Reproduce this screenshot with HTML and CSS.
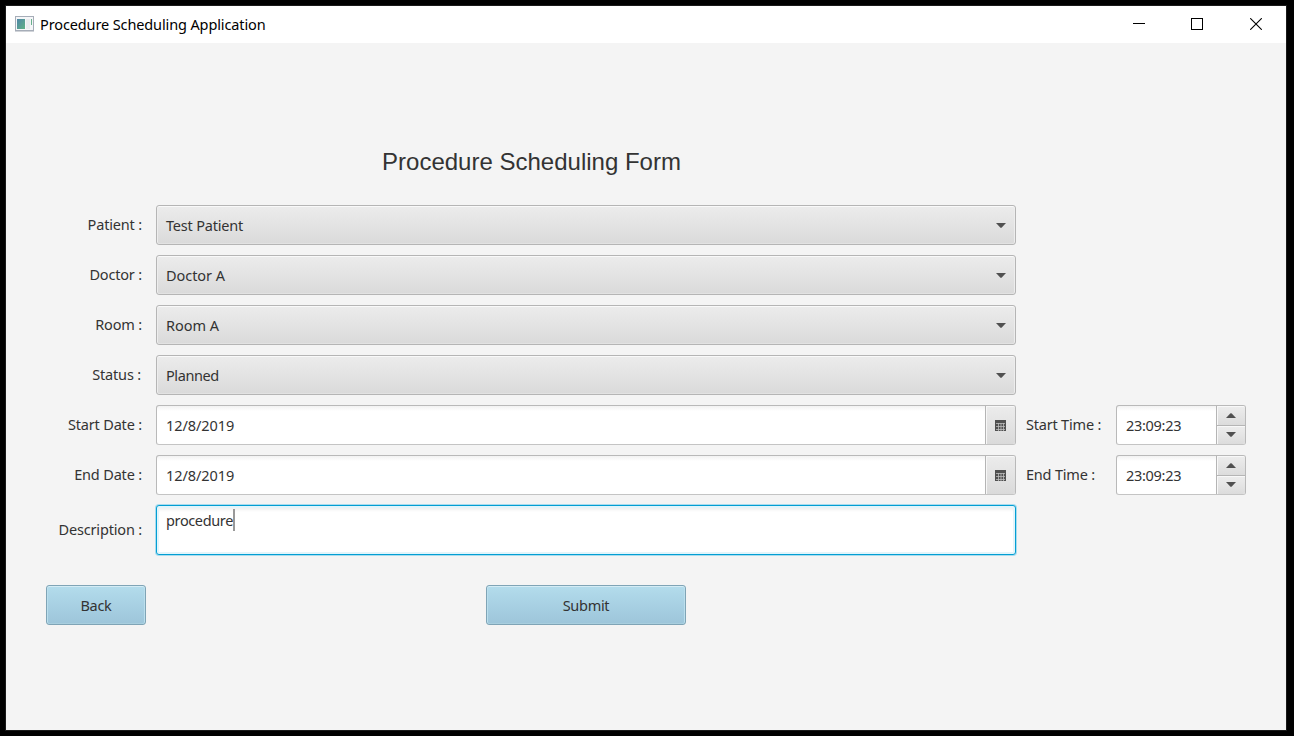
FILE: index.html
```html
<!DOCTYPE html>
<html lang="en">
<head>
<meta charset="utf-8">
<title>Procedure Scheduling Application</title>
<link rel="stylesheet" href="styles.css">
</head>
<body>
<div class="window">
  <header class="titlebar">
    <svg class="app-icon" width="19" height="16" viewBox="0 0 19 16"><defs><linearGradient id="g" x2="1" y2="1"><stop stop-color="#4f86a8"/><stop offset="1" stop-color="#5fb184"/></linearGradient></defs><rect x=".5" y=".5" width="18" height="14" fill="#f5f6f8" stroke="#a6adb8"/><path class="base" d="M0 15.5h19"/><rect x="2" y="3" width="8" height="10" fill="url(#g)"/><rect x="11" y="3" width="4" height="10" fill="#e9ebee"/><path class="mark" d="M16.5 3v6"/></svg>
    <span class="title">Procedure Scheduling Application</span>
    <div class="controls">
      <svg width="12" height="12" viewBox="0 0 12 12"><path d="M0 5.5h12"/></svg>
      <svg width="12" height="12" viewBox="0 0 12 12"><rect x=".5" y=".5" width="11" height="11"/></svg>
      <svg class="close" width="12" height="12" viewBox="0 0 12 12"><path d="M.2 .2l11.6 11.6M11.8 .2L.2 11.8"/></svg>
    </div>
  </header>
  <main class="content">
    <h1 class="heading">Procedure Scheduling Form</h1>
    <div class="form">
      <div class="label">Patient :</div>
      <div class="combo"><span>Test Patient</span><svg width="10" height="5" viewBox="0 0 10 5"><path d="M0 0h10L5.8 4.4q-.8.7-1.6 0z"/></svg></div>
      <div class="label">Doctor :</div>
      <div class="combo"><span class="loose">Doctor A</span><svg width="10" height="5" viewBox="0 0 10 5"><path d="M0 0h10L5.8 4.4q-.8.7-1.6 0z"/></svg></div>
      <div class="label">Room :</div>
      <div class="combo"><span class="loose">Room A</span><svg width="10" height="5" viewBox="0 0 10 5"><path d="M0 0h10L5.8 4.4q-.8.7-1.6 0z"/></svg></div>
      <div class="label status-label">Status :</div>
      <div class="combo"><span class="tight">Planned</span><svg width="10" height="5" viewBox="0 0 10 5"><path d="M0 0h10L5.8 4.4q-.8.7-1.6 0z"/></svg></div>

      <div class="label">Start Date :</div>
      <div class="field"><span class="value date">12/8/2019</span><div class="picker"><svg width="11" height="11" viewBox="0 0 11 11"><path d="M0 0h11v11H0z"/><path class="lines" d="M1 3.5h9M1 6.5h9M1 9.5h9M3.5 3v8M6 3v8M8.5 3v8"/></svg></div></div>
      <div class="label time-label">Start Time :</div>
      <div class="field"><span class="value">23:09:23</span><div class="spinner"><i><svg width="10" height="5" viewBox="0 0 10 5"><path d="M0 5h10L5.8.6Q5-.1 4.2.6z"/></svg></i><i><svg width="10" height="5" viewBox="0 0 10 5"><path d="M0 0h10L5.8 4.4q-.8.7-1.6 0z"/></svg></i></div></div>

      <div class="label">End Date :</div>
      <div class="field"><span class="value date">12/8/2019</span><div class="picker"><svg width="11" height="11" viewBox="0 0 11 11"><path d="M0 0h11v11H0z"/><path class="lines" d="M1 3.5h9M1 6.5h9M1 9.5h9M3.5 3v8M6 3v8M8.5 3v8"/></svg></div></div>
      <div class="label time-label">End Time :</div>
      <div class="field"><span class="value">23:09:23</span><div class="spinner"><i><svg width="10" height="5" viewBox="0 0 10 5"><path d="M0 5h10L5.8.6Q5-.1 4.2.6z"/></svg></i><i><svg width="10" height="5" viewBox="0 0 10 5"><path d="M0 0h10L5.8 4.4q-.8.7-1.6 0z"/></svg></i></div></div>

      <div class="label">Description :</div>
      <div class="textarea"><span>procedure</span><b class="caret"></b></div>
    </div>
    <div class="actions">
      <div class="button">Back</div>
      <div class="button submit">Submit</div>
    </div>
  </main>
</div>
</body>
</html>
```
FILE: styles.css
```css
* { box-sizing: border-box; }
body {
  margin: 0;
  height: 736px;
  padding: 6px 8px 6px 6px;
  background: #000;
  color: #333;
  font: 14.5px/20px "Noto Sans", "Open Sans", sans-serif;
  letter-spacing: -0.3px;
  white-space: nowrap;
  overflow: hidden;
}
.window { height: 724px; background: #f4f4f4; box-shadow: 0 0 0 1px #1a1a1a; }
.titlebar { display: flex; align-items: center; height: 37px; padding: 0 0 2px 9px; background: #fff; color: #000; }
.app-icon { margin-right: 6px; }
.title { letter-spacing: -0.12px; }
.controls { display: flex; gap: 46px; margin-left: auto; padding-right: 24px; }
.controls svg { fill: none; stroke: #000; }
.controls .close { margin-left: 1px; stroke-width: 1.1; }
.content { padding: 100px 40px 0; }
.heading { margin: 0; width: 971px; height: 37px; text-align: center; font: 24px/37px "Liberation Sans", Arial, sans-serif; letter-spacing: 0; }
.form {
  display: grid;
  grid-template-columns: 100px 860px 80px 130px;
  grid-template-rows: repeat(6, 40px) 50px;
  gap: 10px;
  margin-top: 25px;
}
.label { display: flex; align-items: center; justify-content: flex-end; grid-column: 1; padding: 0 4px 2px 0; letter-spacing: -0.17px; }
.status-label { padding-right: 5px; }
.time-label { grid-column: 3; justify-content: flex-start; padding-right: 0; letter-spacing: -0.2px; }
.loose { letter-spacing: -0.05px; }
.tight { letter-spacing: -0.42px; }
.combo {
  display: flex; align-items: center; justify-content: space-between;
  padding: 0 9px;
  border: 1px solid #b5b5b5; border-radius: 3px;
  background: linear-gradient(#ececec, #dadada);
  box-shadow: inset 0 1px #f9f9f9, inset 1px 0 #ededed, inset -1px 0 #ededed, inset 0 -1px #e2e2e2;
  letter-spacing: -0.2px;
}
.combo, .textarea { grid-column: 2; }
.content svg path { fill: #505050; }
.app-icon .base { stroke: #d0d3d8; }
.app-icon .mark { stroke: #68b08c; }
.field {
  display: flex;
  border: 1px solid #b9b9b9; border-bottom-color: #c4c4c4; border-radius: 3px;
  background: linear-gradient(#f2f2f2, #fff 5px);
  overflow: hidden;
}
.value { flex: 1; padding-left: 9px; line-height: 38px; }
.date { letter-spacing: -0.08px; }
.picker {
  display: flex; align-items: center; justify-content: center;
  width: 30px; border-left: 1px solid #b5b5b5;
  background: linear-gradient(#ececec, #dadada);
  box-shadow: inset 1px 1px #f7f7f7;
}
.content .picker .lines { fill: none; stroke: #bdbdbd; stroke-width: .8; }
.spinner { display: flex; flex-direction: column; width: 29px; border-left: 1px solid #b5b5b5; }
.spinner i {
  display: flex; flex: 1; align-items: center; justify-content: center;
  background: linear-gradient(#ededed, #dcdcdc);
  box-shadow: inset 1px 1px #f8f8f8;
}
.spinner i + i { border-top: 1px solid #b5b5b5; }
.textarea {
  display: flex; align-items: flex-start;
  padding: 4px 9px;
  border: 1px solid #039ed3; border-radius: 3px;
  background: #fff;
  box-shadow: 0 0 0 1px #a9dcee, inset 0 0 0 2px #e3f5fb, inset 0 4px 3px #f0f0f0;
  letter-spacing: -0.37px;
}
.caret { width: 2px; height: 22px; margin-top: -1px; background: #999; }
.actions { display: flex; gap: 340px; margin-top: 30px; }
.button {
  width: 100px; height: 40px; line-height: 38px; text-align: center;
  border: 1px solid #7fa4b6; border-radius: 3px;
  background: linear-gradient(#b3dcec, #9dc5da);
  box-shadow: inset 0 1px #d4ecf5, inset 1px 0 #bbdfed, inset -1px 0 #bbdfed, inset 0 -1px #a8cede;
}
.submit { width: 200px; }
```
